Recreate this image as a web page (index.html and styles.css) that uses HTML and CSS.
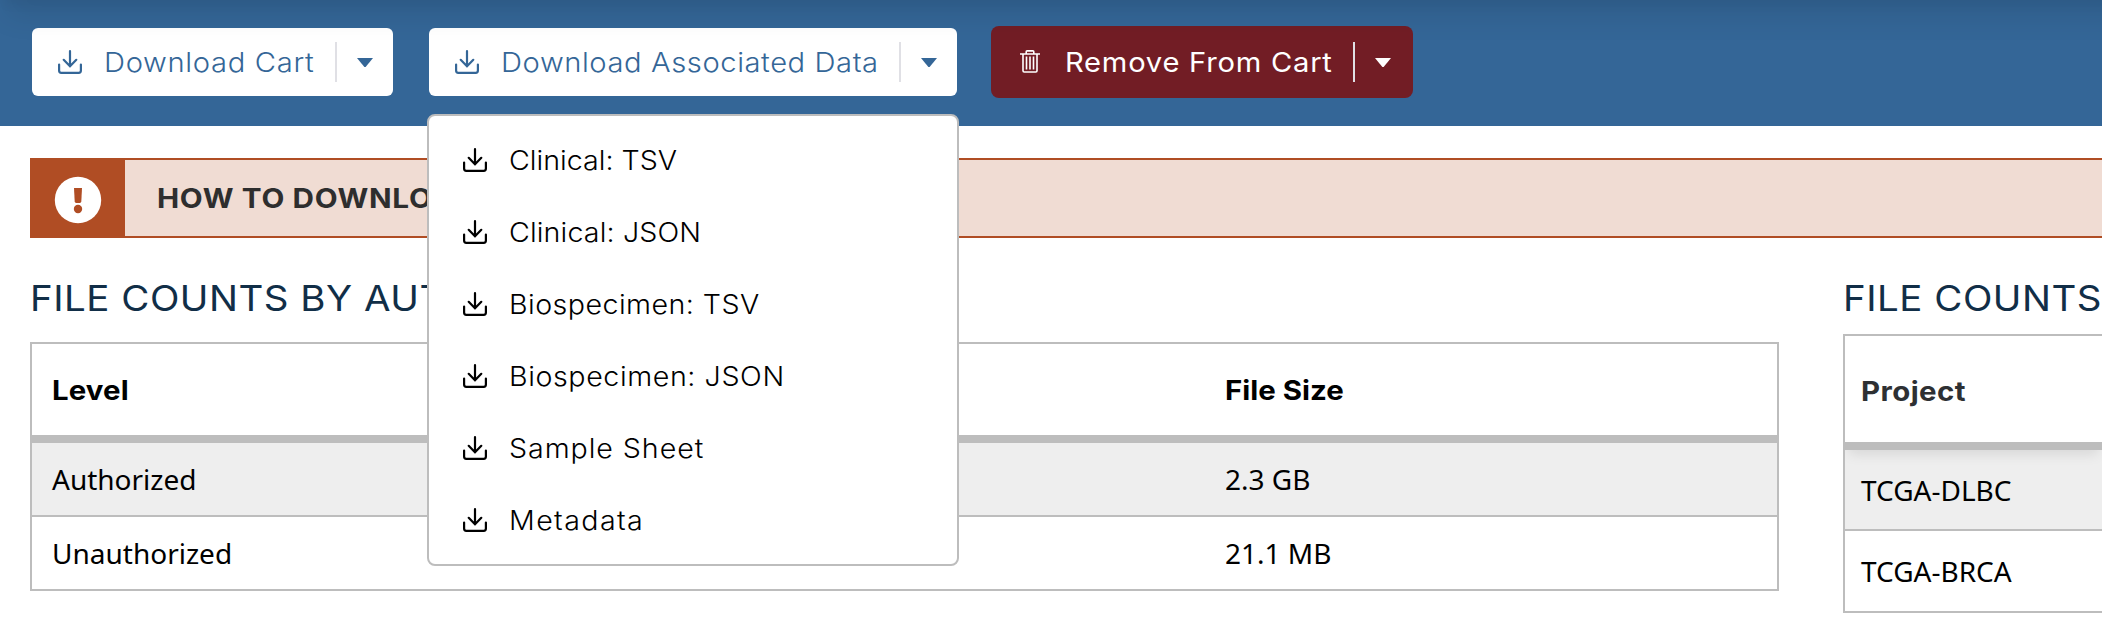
FILE: index.html
```html
<!DOCTYPE html>
<html lang="en">
<head>
<meta charset="utf-8">
<title>Cart</title>
<link rel="stylesheet" href="styles.css">
</head>
<body>
<svg class="defs" width="0" height="0">
  <symbol id="download" viewBox="0 0 24 24">
    <path d="M12 1.2V16.4M5.7 9.8 12 16.3 18.3 9.8M1.1 14.6V20.6Q1.1 22.9 3.3 22.9H20.7Q22.9 22.9 22.9 20.6V14.6" fill="none" stroke="currentColor" stroke-width="2.2" stroke-linecap="round" stroke-linejoin="round"/>
  </symbol>
  <symbol id="trash" viewBox="0 0 20 24">
    <path d="M0 4H20M6.2 3.5V1.8Q6.2 .9 7.1 .9H12.9Q13.8 .9 13.8 1.8V3.5M3 4.5V20.8Q3 22 4.2 22H15.8Q17 22 17 20.8V4.5M6.5 6.6V19.4M10 6.6V19.4M13.5 6.6V19.4" fill="none" stroke="currentColor" stroke-width="1.6"/>
  </symbol>
</svg>

<header class="toolbar">
  <button class="btn btn-cart"><svg class="icon"><use href="#download"/></svg><span class="label wide ls-cart">Download Cart</span><i class="divider"></i><i class="caret"></i></button>
  <div class="menu-anchor">
    <button class="btn btn-data"><svg class="icon"><use href="#download"/></svg><span class="label wide ls-data">Download Associated Data</span><i class="divider"></i><i class="caret"></i></button>
    <ul class="menu">
      <li class="item"><svg class="icon"><use href="#download"/></svg><span class="wide ls-ct">Clinical: TSV</span></li>
      <li class="item"><svg class="icon"><use href="#download"/></svg><span class="wide ls-cj">Clinical: JSON</span></li>
      <li class="item"><svg class="icon"><use href="#download"/></svg><span class="wide ls-bt">Biospecimen: TSV</span></li>
      <li class="item"><svg class="icon"><use href="#download"/></svg><span class="wide ls-bj">Biospecimen: JSON</span></li>
      <li class="item"><svg class="icon"><use href="#download"/></svg><span class="wide ls-ss">Sample Sheet</span></li>
      <li class="item"><svg class="icon"><use href="#download"/></svg><span class="wide ls-md">Metadata</span></li>
    </ul>
  </div>
  <button class="btn btn-remove"><svg class="trash"><use href="#trash"/></svg><span class="label wide ls-remove">Remove From Cart</span><i class="divider"></i><i class="caret"></i></button>
</header>

<main class="content">
  <section class="alert">
    <div class="alert-icon">
      <svg width="48" height="48" viewBox="0 0 48 48"><circle cx="24" cy="24" r="23.2" fill="#fff"/><path d="M20 12H28L27.3 25.6Q27.2 27 25.8 27H22.2Q20.8 27 20.7 25.6Z" fill="#b04d24"/><circle cx="24" cy="33" r="4.2" fill="#b04d24"/></svg>
    </div>
    <div class="alert-title wide">HOW TO DOWNLO</div>
  </section>
  <div class="columns">
    <section class="summary">
      <h2 class="heading">FILE COUNTS BY AUT</h2>
      <div class="table by-level">
        <div class="row head"><span class="wide ls-level">Level</span><span class="wide ls-size">File Size</span></div>
        <div class="row shaded"><span>Authorized</span><span>2.3 GB</span></div>
        <div class="row"><span>Unauthorized</span><span>21.1 MB</span></div>
      </div>
    </section>
    <section class="projects">
      <h2 class="heading">FILE COUNTS</h2>
      <div class="table by-project">
        <div class="row head"><span class="wide ls-project">Project</span></div>
        <div class="row shaded"><span>TCGA-DLBC</span></div>
        <div class="row"><span>TCGA-BRCA</span></div>
      </div>
    </section>
  </div>
</main>
</body>
</html>
```
FILE: styles.css
```css
* { box-sizing: border-box; }
body {
  margin: 0;
  width: 2102px;
  height: 632px;
  overflow: hidden;
  background: #fff;
  color: #000;
  font: 28px/40px "Noto Sans", sans-serif;
}
.defs { position: absolute; }

/* Toolbar */
.toolbar {
  position: relative;
  display: flex;
  align-items: flex-start;
  height: 126px;
  padding: 26px 32px 0;
  background: #346697;
  z-index: 2;
}
/* Shadow cast by the bar above the toolbar */
.toolbar::before {
  content: "";
  position: absolute;
  left: 0;
  right: -40px;
  top: -40px;
  height: 40px;
  box-shadow: 0 20px 30px -6px rgba(0, 0, 0, .1), 0 8px 12px -4px rgba(0, 0, 0, .05);
  pointer-events: none;
  z-index: 3;
}
.btn {
  display: flex;
  align-items: center;
  height: 68px;
  margin: 2px 0 0;
  padding: 0 20px 0 26px;
  border: 0;
  border-radius: 6px;
  background: #fff;
  color: #346697;
  font: 350 27px/40px Inter, sans-serif;
  white-space: nowrap;
}
.btn-cart { width: 361px; margin-right: 36px; }
.btn-data { width: 528px; }
.btn-remove {
  width: 422px;
  height: 72px;
  margin: 0 0 0 34px;
  padding: 0 22px 0 29px;
  border-radius: 8px;
  background: #721d25;
  color: #fff;
  font-weight: 400;
}
.icon { width: 24px; height: 24px; flex: none; overflow: visible; }
.trash { width: 20px; height: 24px; flex: none; }
/* Widened letterforms */
.wide {
  --stretch: 1.08;
  transform: translateY(1px) scaleX(var(--stretch));
  transform-origin: left center;
}
.label { margin-left: 22px; width: 0; }
.btn-remove .label { margin-left: 24.5px; }
.divider {
  width: 2px;
  height: 40px;
  margin-left: auto;
  background: #e0e0e5;
}
.caret {
  width: 16px;
  height: 9px;
  margin: 1px 0 0 20px;
  background: currentColor;
  clip-path: polygon(0 0, 100% 0, 54% 100%, 46% 100%);
}

/* Menu */
.menu-anchor { position: relative; }
.menu {
  position: absolute;
  top: 88px;
  left: -2px;
  width: 532px;
  margin: 0;
  padding: 8px 0;
  border: 2px solid #bdbdbd;
  border-radius: 8px;
  background: #fff;
  list-style: none;
}
.item {
  display: flex;
  align-items: center;
  gap: 22px;
  height: 72px;
  padding-left: 34px;
  color: #000;
  font: 350 27px/40px Inter, sans-serif;
  white-space: nowrap;
}
.item .wide { --stretch: 1.06; }

/* Content */
.content { padding: 32px 0 0 30px; }
.alert {
  display: flex;
  height: 80px;
  border: 2px solid #b04d24;
  border-right: 0;
  background: #f0dcd3;
}
.alert-icon {
  display: flex;
  align-items: center;
  justify-content: center;
  width: 93px;
  padding: 4px 1px 0 0;
  background: #b04d24;
}
.alert-title {
  --stretch: 1.1;
  margin-left: 31.5px;
  color: #2e2e2e;
  font: 700 27px/76px Inter, sans-serif;
  letter-spacing: .6px;
}
.columns { display: flex; gap: 64px; margin-top: 36px; }
.summary { width: 1749px; flex: none; }
.projects { flex: 1; }
.heading {
  margin: 0;
  width: 230px;
  color: #112e47;
  font: 400 35px/48px Inter, sans-serif;
  letter-spacing: .45px;
  white-space: nowrap;
  transform: scaleX(1.1);
  transform-origin: left center;
}
.table { border: 2px solid #bdbdbd; }
.by-level { margin-top: 20px; }
.by-project { margin-top: 12px; border-right: 0; }
.row { display: grid; align-items: center; }
.row + .row + .row { border-top: 2px solid #bdbdbd; }
.by-level .row { grid-template-columns: 1173px 1fr; height: 72px; padding-left: 20px; }
.by-level .row + .row + .row { height: 74px; }
.by-level .head { height: 99px; padding-top: 1px; }
.by-project .row { height: 79px; padding-left: 16px; }
.by-project .row + .row + .row { height: 82px; }
.by-project .head {
  position: relative;
  height: 114px;
  padding-top: 3px;
  color: #2e3033;
  box-shadow: 20px 8px 12px -4px rgba(0, 0, 0, .1), 0 8px 12px -4px rgba(0, 0, 0, .1);
  clip-path: inset(0 0 -20px 0);
  box-shadow: 0 8px 12px -4px rgba(0, 0, 0, .1);
}
.head.row {
  border-bottom: 8px solid #bdbdbd;
  font: 700 27px/40px Inter, sans-serif;
}
.head .wide { --stretch: 1.09; justify-self: start; }
.shaded { background: #eee; }

/* Tracking per label */
.ls-cart { letter-spacing: .62px; }
.ls-data { letter-spacing: .53px; }
.ls-remove { letter-spacing: .7px; }
.ls-ct { letter-spacing: 0; }
.ls-cj { letter-spacing: .13px; }
.ls-bt { letter-spacing: .42px; }
.ls-bj { letter-spacing: .55px; }
.ls-ss { letter-spacing: .88px; }
.ls-md { letter-spacing: 1.3px; }
.ls-level { letter-spacing: .1px; }
.ls-size { letter-spacing: 0; }
.ls-project { letter-spacing: .4px; }
```
